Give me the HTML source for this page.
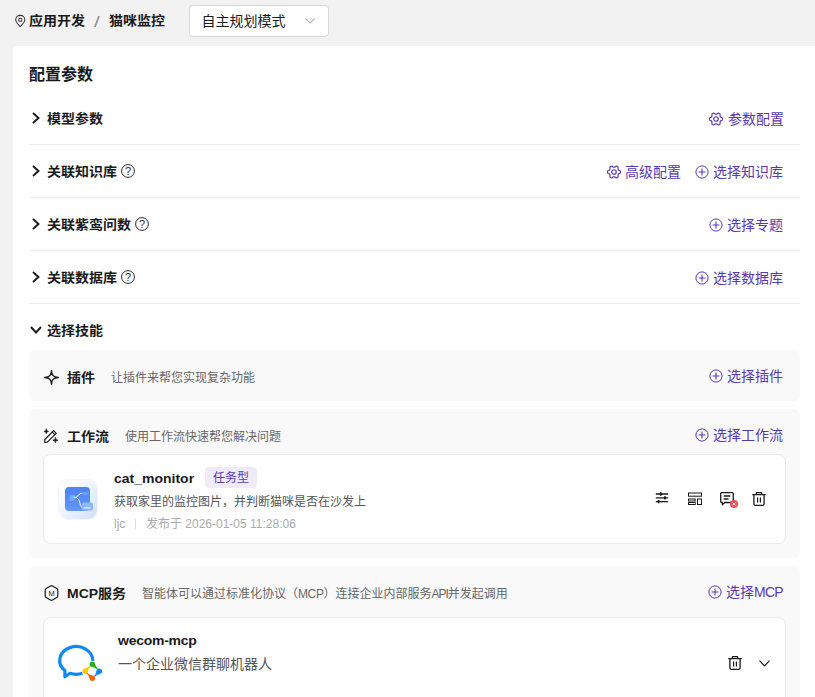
<!DOCTYPE html>
<html lang="zh-CN">
<head>
<meta charset="utf-8">
<title>配置参数</title>
<style>
*{box-sizing:border-box;margin:0;padding:0}
html,body{width:815px;height:697px;overflow:hidden;background:#f2f2f2}
body{font-family:"Liberation Sans","Noto Sans CJK SC",sans-serif;color:#1a1a1a;font-size:14px;position:relative}
.abs{position:absolute;white-space:nowrap}
.b{font-weight:700}
.t14.b{transform:scaleY(0.920);transform-origin:50% 82%}
.t14{font-size:14px;line-height:20px;height:20px}
.t12{font-size:12px;line-height:18px;height:18px}
.pur{color:#5a38b4}
.gray{color:#666}
.card{position:absolute;left:13px;top:46px;width:820px;height:700px;background:#fff;border-radius:4px}
.hr{position:absolute;left:29px;width:771px;height:1px;background:#ececec}
.box{position:absolute;left:29px;width:771px;background:#f9f9f9;border-radius:6px}
.inner{position:absolute;left:43px;width:743px;background:#fff;border:1px solid #ebebeb;border-radius:8px}
svg{position:absolute;overflow:visible}
</style>
</head>
<body>
<svg width="0" height="0" style="position:absolute"><defs>
<symbol id="gear" viewBox="0 0 14 14"><path d="M13.6 7.0L13.6 7.6L13.3 8.1L12.6 8.5L11.9 8.7L11.5 9.0L11.3 9.4L11.1 9.8L11.0 10.2L11.1 11.0L11.1 11.8L10.8 12.3L10.3 12.6L9.8 12.8L9.2 12.9L8.5 12.4L7.9 11.9L7.4 11.8L7.0 11.8L6.6 11.8L6.1 11.9L5.5 12.4L4.8 12.9L4.2 12.8L3.7 12.6L3.2 12.3L2.9 11.8L2.9 11.0L3.0 10.2L2.9 9.8L2.7 9.4L2.5 9.0L2.1 8.7L1.4 8.5L0.7 8.1L0.4 7.6L0.4 7.0L0.4 6.4L0.7 5.9L1.4 5.5L2.1 5.3L2.5 5.0L2.7 4.6L2.9 4.2L3.0 3.8L2.9 3.0L2.9 2.2L3.2 1.7L3.7 1.4L4.2 1.2L4.8 1.1L5.5 1.6L6.1 2.1L6.6 2.2L7.0 2.2L7.4 2.2L7.9 2.1L8.5 1.6L9.2 1.1L9.8 1.2L10.3 1.4L10.8 1.7L11.1 2.2L11.1 3.0L11.0 3.8L11.1 4.2L11.3 4.6L11.5 5.0L11.9 5.3L12.6 5.5L13.3 5.9L13.6 6.4Z" fill="none" stroke="currentColor" stroke-width="1.200" stroke-linejoin="round"/><circle cx="7" cy="7" r="2.250" fill="none" stroke="currentColor" stroke-width="1.200"/></symbol>
<symbol id="plus" viewBox="0 0 14 14"><circle cx="7" cy="7" r="6.100" fill="none" stroke="currentColor" stroke-width="1"/><path d="M7 3.600v6.800M3.600 7h6.800" fill="none" stroke="currentColor" stroke-width="1.100"/></symbol>
<symbol id="help" viewBox="0 0 14 14"><circle cx="7" cy="7" r="6.400" fill="none" stroke="#2a2a2a" stroke-width="1"/><text x="7" y="11" text-anchor="middle" font-size="11" font-family="Liberation Sans, sans-serif" fill="#2a2a2a">?</text></symbol>
<symbol id="chev" viewBox="0 0 8 12"><path d="M1 1L6.500 6L1 11" fill="none" stroke="#1a1a1a" stroke-width="1.900"/></symbol>
<symbol id="trash" viewBox="0 0 14 14"><path d="M0.300 2.700h13.400M4.300 2.500v-1.300a0.6 0.6 0 0 1 0.6-0.6h4.200a0.6 0.6 0 0 1 0.6 0.6v1.300M1.900 2.900v8.900a1.500 1.500 0 0 0 1.500 1.500h7.200a1.500 1.500 0 0 0 1.500-1.500v-8.900" fill="none" stroke="#1a1a1a" stroke-width="1.300"/><path d="M5.600 5.400v5.200M8.400 5.400v5.200" fill="none" stroke="#1a1a1a" stroke-width="1.200"/></symbol>
</defs></svg>
<!-- breadcrumb -->
<svg style="left:14.700px;top:14.800px" width="10.500" height="12.300" viewBox="0 0 12 14" fill="none" stroke="#333" stroke-width="1.150"><path d="M6 13.2C3.2 10.2 .8 7.9 .8 5.6a5.2 5.2 0 0 1 10.4 0c0 2.300-2.400 4.600-5.200 7.600z"/><circle cx="6" cy="5.600" r="1.900"/></svg>
<div class="abs t14 b" style="left:29px;top:10px">应用开发</div>
<div class="abs t14" style="left:93.800px;top:12px;color:#8f8f8f;transform:scaleX(1.500);transform-origin:left">/</div>
<div class="abs t14 b" style="left:109px;top:10px">猫咪监控</div>
<div class="abs" style="left:189px;top:5px;width:140px;height:32px;background:#fff;border:1px solid #d9d9d9;border-radius:4px"></div>
<div class="abs t14" style="left:201.500px;top:11px">自主规划模式</div>
<svg style="left:305px;top:18px" width="10" height="6" viewBox="0 0 10 6" fill="none" stroke="#b0b0b0" stroke-width="1.100"><path d="M.5 .5L5 5L9.500 .5"/></svg>

<div class="card"></div>
<div class="abs b" style="left:29px;top:63px;font-size:16px;line-height:24px">配置参数</div>

<!-- row 1 -->
<svg class="pur" style="left:709px;top:111.700px" width="14" height="14"><use href="#gear"/></svg>
<svg style="left:32px;top:112px" width="8" height="12" viewBox="0 0 8 12" fill="none" stroke="#1a1a1a" stroke-width="1.900"><path d="M1 1L6.500 6L1 11"/></svg>
<div class="abs t14 b" style="left:47px;top:108px">模型参数</div>
<div class="abs t14 pur" style="left:728px;top:109px">参数配置</div>
<div class="hr" style="top:144px"></div>

<!-- row 2 -->
<svg class="" style="left:121px;top:164px" width="14" height="14"><use href="#help"/></svg><svg class="pur" style="left:607px;top:164.700px" width="14" height="14"><use href="#gear"/></svg><svg class="pur" style="left:695px;top:165px" width="14" height="14"><use href="#plus"/></svg>
<svg style="left:32px;top:165px" width="8" height="12" viewBox="0 0 8 12" fill="none" stroke="#1a1a1a" stroke-width="1.900"><path d="M1 1L6.500 6L1 11"/></svg>
<div class="abs t14 b" style="left:47px;top:161px">关联知识库</div>
<div class="abs t14 pur" style="left:625px;top:162px">高级配置</div>
<div class="abs t14 pur" style="left:713px;top:162px">选择知识库</div>
<div class="hr" style="top:197px"></div>

<!-- row 3 -->
<svg class="" style="left:135px;top:217px" width="14" height="14"><use href="#help"/></svg><svg class="pur" style="left:709px;top:218px" width="14" height="14"><use href="#plus"/></svg>
<svg style="left:32px;top:218px" width="8" height="12" viewBox="0 0 8 12" fill="none" stroke="#1a1a1a" stroke-width="1.900"><path d="M1 1L6.500 6L1 11"/></svg>
<div class="abs t14 b" style="left:47px;top:214px">关联紫鸾问数</div>
<div class="abs t14 pur" style="left:727px;top:215px">选择专题</div>
<div class="hr" style="top:250px"></div>

<!-- row 4 -->
<svg class="" style="left:121px;top:270px" width="14" height="14"><use href="#help"/></svg><svg class="pur" style="left:695px;top:271px" width="14" height="14"><use href="#plus"/></svg>
<svg style="left:32px;top:271px" width="8" height="12" viewBox="0 0 8 12" fill="none" stroke="#1a1a1a" stroke-width="1.900"><path d="M1 1L6.500 6L1 11"/></svg>
<div class="abs t14 b" style="left:47px;top:267px">关联数据库</div>
<div class="abs t14 pur" style="left:713px;top:268px">选择数据库</div>
<div class="hr" style="top:303px"></div>

<!-- row 5 -->
<svg style="left:30.300px;top:326px" width="12" height="8" viewBox="0 0 12 8" fill="none" stroke="#1a1a1a" stroke-width="1.900"><path d="M1 1L6 6.500L11 1"/></svg>
<div class="abs t14 b" style="left:47px;top:320px">选择技能</div>

<!-- plugin box -->
<div class="box" style="top:350px;height:51px"></div>
<svg style="left:44px;top:370px" width="15" height="15" viewBox="0 0 15 15" fill="none" stroke="#1a1a1a" stroke-width="1.300" stroke-linejoin="round"><path d="M7.500 0.600C7.800 5.600 9.400 7.200 14.400 7.500C9.400 7.800 7.800 9.400 7.500 14.400C7.200 9.400 5.600 7.800 0.600 7.500C5.600 7.200 7.200 5.600 7.500 0.600Z"/></svg>
<svg class="pur" style="left:709px;top:369px" width="14" height="14"><use href="#plus"/></svg>
<div class="abs t14 b" style="left:67px;top:367px">插件</div>
<div class="abs t12 gray" style="left:111px;top:369px">让插件来帮您实现复杂功能</div>
<div class="abs t14 pur" style="left:727px;top:366px">选择插件</div>

<!-- workflow box -->
<div class="box" style="top:409px;height:149px"></div>
<svg style="left:44px;top:429px" width="14" height="14" viewBox="0 0 14 14" fill="none" stroke="#1a1a1a" stroke-width="1.200" stroke-linejoin="round" stroke-linecap="round"><path d="M9.600 1.700L12.200 4.300L3.300 13.200L0.700 13.300L0.800 10.500Z"/><path d="M8.200 3.200L10.700 5.700"/><path d="M2.3 0.10000000000000009Q2.3 2.4 4.6 2.4Q2.3 2.4 2.3 4.699999999999999Q2.3 2.4 0.0 2.4Q2.3 2.4 2.3 0.10000000000000009Z" fill="#1a1a1a" stroke-width="0.700"/><path d="M11.4 8.6Q11.4 11.2 14.0 11.2Q11.4 11.2 11.4 13.799999999999999Q11.4 11.2 8.8 11.2Q11.4 11.2 11.4 8.6Z" fill="#1a1a1a" stroke-width="0.700"/></svg>
<svg class="pur" style="left:695px;top:428px" width="14" height="14"><use href="#plus"/></svg>
<div class="abs t14 b" style="left:67px;top:426px">工作流</div>
<div class="abs t12 gray" style="left:125px;top:428px">使用工作流快速帮您解决问题</div>
<div class="abs t14 pur" style="left:713px;top:425px">选择工作流</div>
<div class="inner" style="top:454px;height:90px"></div>
<div class="abs" style="left:59px;top:479.500px;width:38px;height:39px;border-radius:9px;background:linear-gradient(135deg,#ffffff 15%,#e9f1fd 55%,#cfe0f9 100%);box-shadow:0 0 0 1px #f3f6fb"></div>
<svg style="left:59px;top:479px" width="40" height="40" viewBox="0 0 40 40"><defs><linearGradient id="cg" x1="0" y1="0" x2="0" y2="1"><stop offset="0" stop-color="#4d82f3"/><stop offset="1" stop-color="#6496f6"/></linearGradient></defs><rect x="6" y="8" width="25" height="24" rx="4" fill="url(#cg)"/><rect x="10.500" y="16" width="5.500" height="6" rx="1" fill="#79a3f7"/><path d="M11 18.300h3.500" stroke="#3fe0e8" stroke-width="1.200" fill="none"/><path d="M14.500 18.300h2.500l4.500-3.800h3" stroke="#e8f0ff" stroke-width="1" fill="none"/><path d="M17 18.300q3.500 1.200 4 6t4 4.200" stroke="#e8f0ff" stroke-width="1" fill="none"/><rect x="23" y="13" width="7" height="3" rx="1" fill="#6d9bf6"/><rect x="22.500" y="23.500" width="11.500" height="8" rx="2" fill="#8fb4f8"/><path d="M24.500 26.300h7" stroke="#4fe3ea" stroke-width="1.100"/><path d="M24.500 28.900h7" stroke="#f3f7ff" stroke-width="1.100"/></svg>
<div class="abs t14 b" style="left:114px;top:468px">cat_monitor</div>
<div class="abs t12 pur" style="left:205px;top:467px;height:21px;line-height:23px;padding:0 8px;background:#efebf8;border-radius:4px">任务型</div>
<div class="abs t12" style="left:114px;top:493px;color:#555">获取家里的监控图片，并判断猫咪是否在沙发上</div>
<div class="abs t12" style="left:114px;top:515px;color:#aaa">ljc</div>
<div class="abs" style="left:135px;top:519px;width:1px;height:10px;background:#ddd"></div>
<div class="abs t12" style="left:146px;top:515px;color:#aaa">发布于 2026-01-05 11:28:06</div>

<svg style="left:655px;top:491px" width="14" height="14" viewBox="0 0 14 14" fill="none" stroke="#1a1a1a"><path d="M0.800 3h12.400M0.800 6.900h12.400M0.800 10.600h12.400" stroke-width="1.400"/><path d="M5.800 1.300v3.400M10 5.200v3.400M3.600 8.900v3.400" stroke-width="1.800"/></svg>
<svg style="left:688px;top:492px" width="14" height="13" viewBox="0 0 14 13" fill="none" stroke="#1a1a1a" stroke-width="1"><rect x="0.500" y="1" width="13" height="3.200"/><rect x="0.500" y="7" width="6.700" height="2"/><rect x="0.500" y="10.500" width="6.700" height="2"/><rect x="9.500" y="7" width="4" height="5.500"/></svg>
<svg style="left:720px;top:492px" width="18" height="17" viewBox="0 0 18 17" fill="none"><path d="M1.700 0.700h10.600a1 1 0 0 1 1 1v7.800a1 1 0 0 1 -1 1h-7.600l-2.300 2.200v-2.200h-0.700a1 1 0 0 1 -1-1v-7.800a1 1 0 0 1 1-1z" stroke="#1a1a1a" stroke-width="1.300" stroke-linejoin="round"/><path d="M3.700 4h6.600M3.700 7h4.800" stroke="#1a1a1a" stroke-width="1.400"/><circle cx="14" cy="12" r="4" fill="#ee4b55"/><path d="M12.600 10.600l2.800 2.800M15.400 10.600l-2.800 2.800" stroke="#fff" stroke-width="1"/></svg>
<svg style="left:752px;top:491.500px" width="14" height="14"><use href="#trash"/></svg>

<!-- mcp box -->
<div class="box" style="top:566px;height:200px"></div>
<svg style="left:44px;top:585px" width="15" height="16" viewBox="0 0 15 16"><path d="M6.500 0.900a2 2 0 0 1 2 0l4.300 2.500a2 2 0 0 1 1 1.700v5.800a2 2 0 0 1 -1 1.700l-4.300 2.500a2 2 0 0 1 -2 0l-4.300-2.500a2 2 0 0 1 -1-1.700v-5.800a2 2 0 0 1 1-1.700z" fill="none" stroke="#1a1a1a" stroke-width="1.200"/><text x="7.500" y="10.600" text-anchor="middle" font-size="7.500" font-weight="400" font-family="Liberation Sans, sans-serif" fill="#1a1a1a">M</text></svg>
<svg class="pur" style="left:708px;top:585px" width="14" height="14"><use href="#plus"/></svg>
<div class="abs t14 b" style="left:67px;top:583px">MCP服务</div>
<div class="abs t12 gray" style="left:142px;top:585px">智能体可以通过标准化协议（<span style="letter-spacing:-0.400px">MCP</span>）连接企业内部服务<span style="letter-spacing:-1px">API</span>并发起调用</div>
<div class="abs t14 pur" style="left:726px;top:582px">选择<span style="letter-spacing:-0.700px">MCP</span></div>
<div class="inner" style="top:617px;height:120px"></div>
<svg style="left:52px;top:638px" width="56" height="48" viewBox="0 0 56 48"><path d="M40.7 22.9A16.5 13.9 0 1 0 12.9 32.6L12.9 38.8L18.0 35.3A16.5 13.9 0 0 0 30.4 35.3" fill="none" stroke="#0c8af2" stroke-width="3.2" stroke-linejoin="round" stroke-linecap="butt"/><circle cx="40.3" cy="26.2" r="2.75" fill="#27b01c"/><path d="M39.9 28.9Q42.8 29.3 45.2 31.5L45.8 30.8Q43.6 28.5 43.0 25.7Z" fill="#27b01c"/><circle cx="47.3" cy="33.2" r="2.75" fill="#0c8af2"/><path d="M44.6 32.8Q44.2 35.7 42.0 38.1L42.7 38.7Q45.0 36.5 47.8 35.9Z" fill="#0c8af2"/><circle cx="40.3" cy="40.2" r="2.75" fill="#fb6500"/><path d="M40.7 37.5Q37.8 37.1 35.4 34.9L34.8 35.6Q37.0 37.9 37.6 40.7Z" fill="#fb6500"/><circle cx="33.3" cy="33.2" r="2.75" fill="#ffc800"/><path d="M36.0 33.6Q36.4 30.7 38.6 28.3L37.9 27.7Q35.6 29.9 32.8 30.5Z" fill="#ffc800"/></svg>
<svg style="left:728px;top:656px" width="14" height="14"><use href="#trash"/></svg>
<svg style="left:759px;top:660px" width="11" height="7" viewBox="0 0 11 7" fill="none" stroke="#1a1a1a" stroke-width="1.200"><path d="M0.500 0.600L5.500 5.800L10.500 0.600"/></svg>
<div class="abs t14 b" style="left:118px;top:630px;letter-spacing:-0.250px">wecom-mcp</div>
<div class="abs t14" style="left:118px;top:654px;color:#555">一个企业微信群聊机器人</div>
</body>
</html>
